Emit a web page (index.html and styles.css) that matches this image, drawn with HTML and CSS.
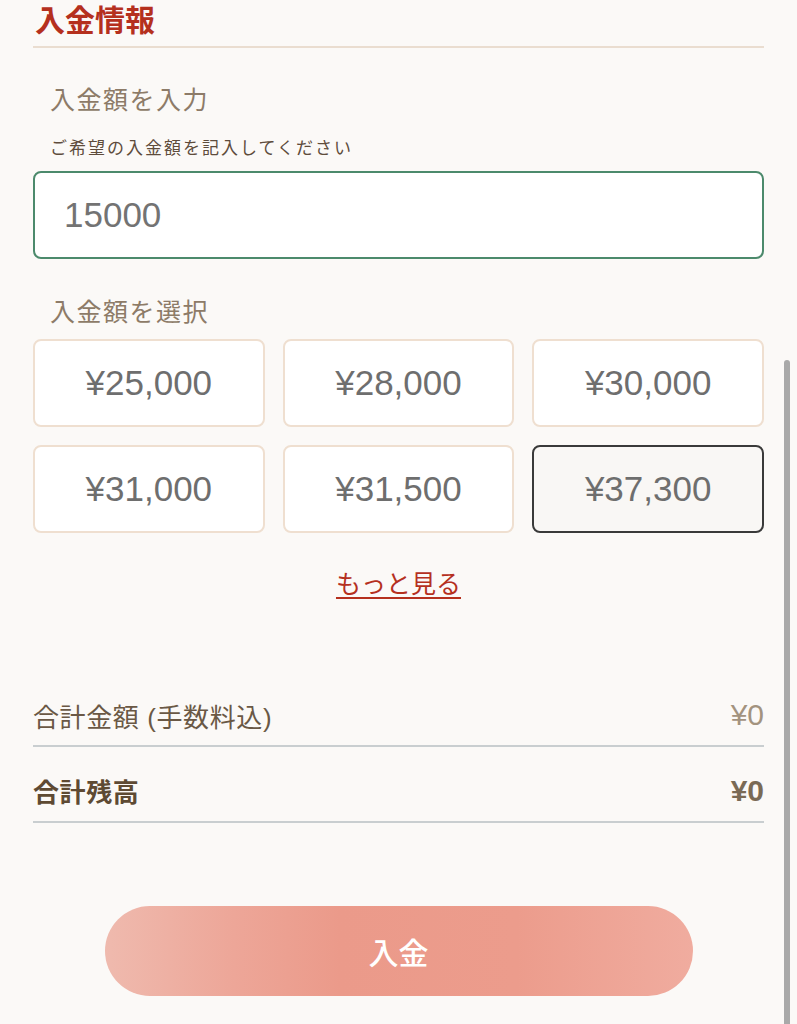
FILE: index.html
```html
<!DOCTYPE html>
<html lang="ja">
<head>
<meta charset="utf-8">
<link rel="stylesheet" href="styles.css">
</head>
<body>
<div class="page">
  <h1 class="title">入金情報</h1>
  <div class="section">
    <div class="label">入金額を入力</div>
    <div class="hint">ご希望の入金額を記入してください</div>
    <div class="input">15000</div>
  </div>
  <div class="section select">
    <div class="label">入金額を選択</div>
    <div class="grid">
      <div class="opt">¥25,000</div>
      <div class="opt">¥28,000</div>
      <div class="opt">¥30,000</div>
      <div class="opt">¥31,000</div>
      <div class="opt">¥31,500</div>
      <div class="opt selected">¥37,300</div>
    </div>
    <div class="more"><a class="more-link">もっと見る</a></div>
  </div>
  <div class="totals">
    <div class="row first"><span>合計金額 (手数料込)</span><span class="val">¥0</span></div>
    <div class="row strong"><span>合計残高</span><span class="val">¥0</span></div>
  </div>
  <div class="action"><button class="btn">入金</button></div>
</div>
<div class="scrollbar"></div>
</body>
</html>
```
FILE: styles.css
```css
html, body {
  margin: 0;
  padding: 0;
  background: #fbf9f7;
}
body {
  font-family: "Liberation Sans", "Noto Sans CJK JP", sans-serif;
  width: 797px;
  height: 1024px;
  overflow: hidden;
  position: relative;
}
.page {
  padding: 0 33px;
}
.title {
  margin: 0;
  padding: 0 0 0 2px;
  font-size: 30px;
  line-height: 42px;
  height: 46px;
  font-weight: 700;
  color: #b5301e;
  border-bottom: 2px solid #eaddd0;
}
.label {
  margin: 36px 0 0 17px;
  font-size: 25px;
  line-height: 32px;
  color: #8d7b68;
  letter-spacing: 1.5px;
}
.hint {
  margin: 22px 0 0 17px;
  font-size: 17px;
  line-height: 22px;
  color: #5e4c3c;
  letter-spacing: 2px;
}
.input {
  margin-top: 11px;
  height: 84px;
  border: 2px solid #4c8a6c;
  border-radius: 8px;
  background: #fff;
  display: flex;
  align-items: center;
  padding-left: 29px;
  font-size: 35px;
  color: #737373;
}
.select .label {
  margin-top: 37px;
}
.grid {
  margin-top: 11px;
  display: grid;
  grid-template-columns: 1fr 1fr 1fr;
  column-gap: 18px;
  row-gap: 18px;
}
.opt {
  height: 84px;
  border: 2px solid #efdfd0;
  border-radius: 8px;
  background: #fff;
  display: flex;
  align-items: center;
  justify-content: center;
  font-size: 35px;
  color: #6e6e6e;
}
.opt.selected {
  border-color: #3a3a3a;
  background: #f9f7f5;
}
.more {
  margin-top: 35px;
  text-align: center;
  font-size: 25px;
  line-height: 32px;
}
.more-link {
  color: #b5301e;
  text-decoration: underline;
  text-underline-offset: 4px;
  text-decoration-thickness: 2px;
}
.totals {
  margin-top: 93px;
}
.row {
  display: flex;
  justify-content: space-between;
  align-items: center;
  box-sizing: border-box;
  height: 74px;
  border-bottom: 2px solid #c9ced0;
  font-size: 26px;
  letter-spacing: 0.6px;
  color: #6a5845;
}
.row.first {
  height: 54px;
  padding-bottom: 8px;
}
.row .val {
  color: #a3937f;
  font-size: 30px;
  letter-spacing: 0;
}
.row.strong {
  height: 76px;
  padding-top: 13px;
  font-weight: 700;
  color: #5e4a33;
}
.row.strong .val {
  color: #7a6a55;
}
.action {
  margin-top: 83px;
  display: flex;
  justify-content: center;
}
.btn {
  width: 588px;
  height: 90px;
  border: none;
  border-radius: 45px;
  background: linear-gradient(90deg, #efbaae 0%, #eda698 22%, #eb9a8a 40%, #ec9c8c 70%, #f0ac9f 100%);
  color: #fff;
  font-family: "Noto Sans CJK JP", sans-serif;
  font-size: 30px;
  font-weight: 500;
  padding: 0;
}
.scrollbar {
  position: absolute;
  right: 7px;
  top: 360px;
  width: 6px;
  height: 700px;
  border-radius: 3px;
  background: #a9a9a9;
}
```
